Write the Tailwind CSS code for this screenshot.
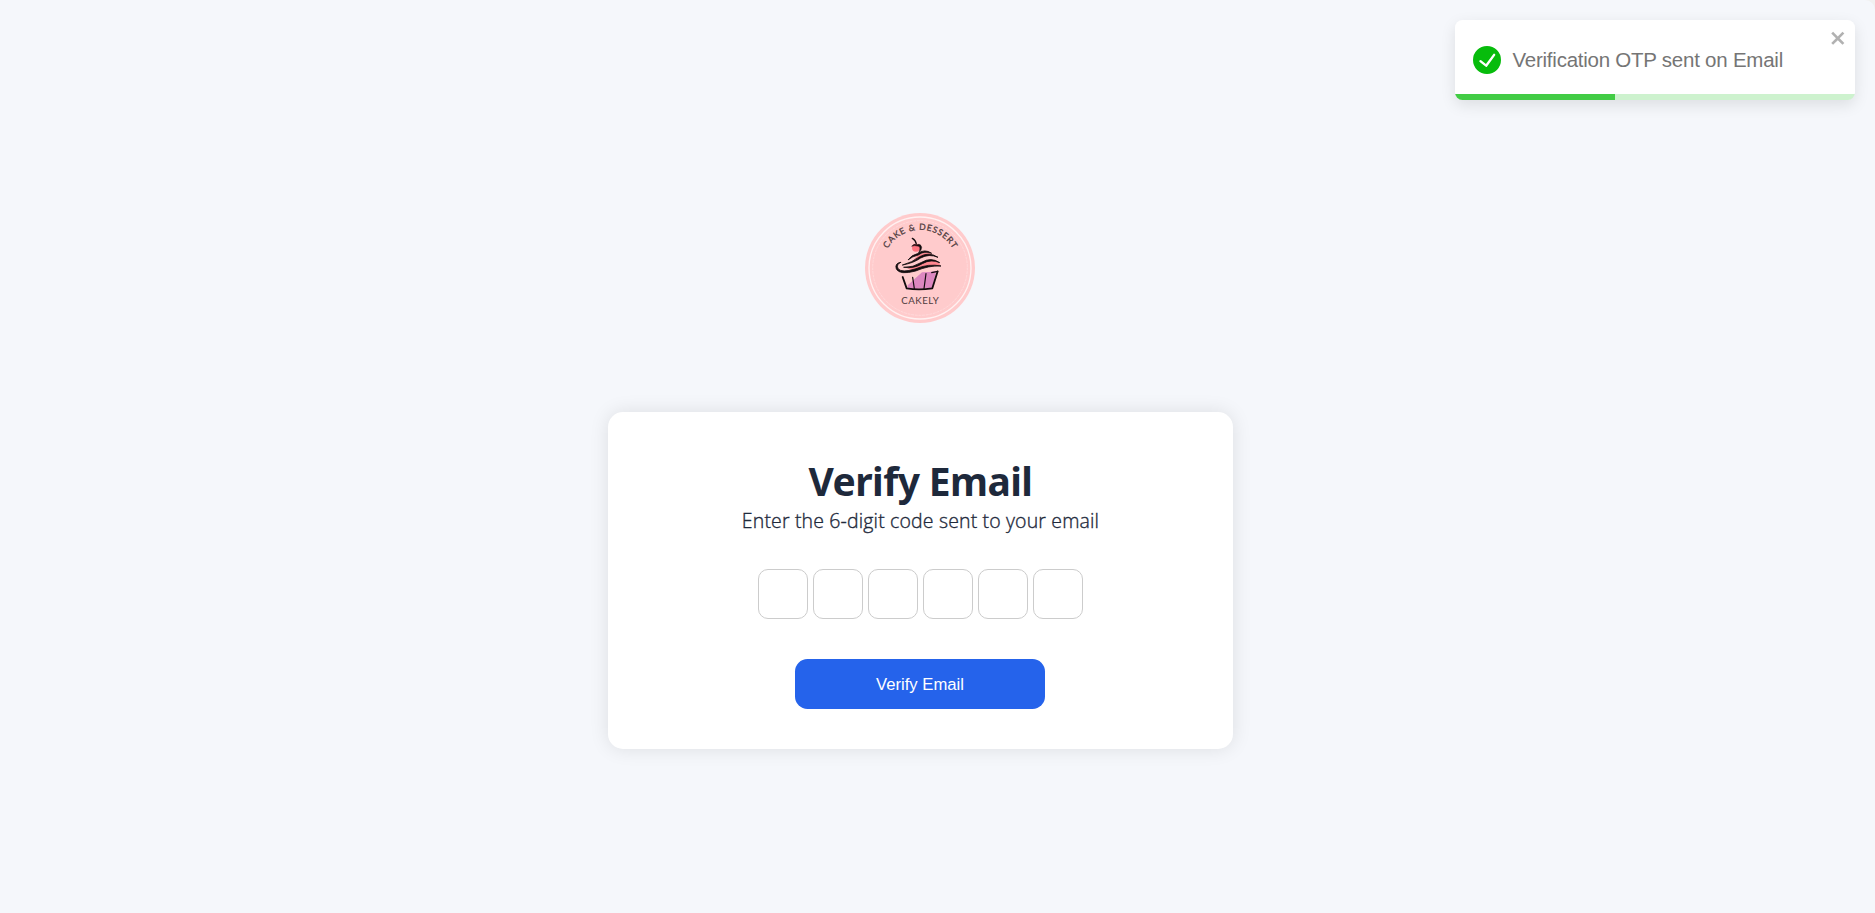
<!DOCTYPE html>
<html lang="en">
<head>
<meta charset="utf-8">
<title>Verify Email</title>
<script src="https://cdn.jsdelivr.net/npm/@tailwindcss/browser@4"></script>
</head>
<body class="bg-[#f1f1f1]">
<main class="flex h-[913px] w-full flex-col items-center overflow-hidden rounded-tr-[10px] bg-[#f5f7fb] pt-[213px] pr-[34px] text-[#1e293b] font-['Noto_Sans',sans-serif]">
  <svg class="mr-px h-[110px] w-[110px] shrink-0" viewBox="30 30 330 330" fill="none" stroke-linecap="round" stroke-linejoin="round">
    <circle cx="195" cy="195" r="165" fill="#ffcbcc"/>
    <circle cx="195" cy="195" r="153" stroke="#fff1f1" stroke-width="4"/>
    <circle cx="195" cy="195" r="142" stroke="#ffe0e1" stroke-width="2" stroke-dasharray="6 5"/>
    <path id="arc" d="M98 137A113 113 0 0 1 301 153"/>
    <text font-family="Lato, sans-serif" font-size="26" fill="#4d3a3c" stroke="#4d3a3c" stroke-width=".8"><textPath href="#arc" textLength="236">CAKE &amp; DESSERT</textPath></text>
    <text x="195" y="302" text-anchor="middle" font-family="Lato, sans-serif" font-size="29" textLength="113" fill="#4d3a3c">CAKELY</text>
    <!-- cherry -->
    <circle cx="183" cy="134" r="12" fill="#ff7480"/>
    <path d="M172 106Q182 111 184 123" stroke="#130c0e" stroke-width="4"/>
    <path d="M171 129Q177 121 185 126Q197 120 200 133Q200 143 191 149Q198 136 192 130Q178 126 171 129Z" fill="#130c0e" stroke="#130c0e" stroke-width="1.500"/>
    <!-- frosting -->
    <path d="M174 173Q190 152 208 149Q222 146 231 154L228 158Q205 157 174 173ZM157 196Q188 192 210 178Q231 168 252 180L257 189Q210 184 180 201Q168 203 157 196Z" fill="#ff8790"/>
    <path d="M137 178Q118 181 124 198Q134 217 182 204Q221 187 258 189Q221 181 180 198Q140 210 129 197Q123 184 137 178Z" fill="#130c0e" stroke="#130c0e" stroke-width="2.500"/>
    <path d="M143 186Q176 180 197 165Q222 151 249 163Q222 145 194 161Q172 178 143 186Z" fill="#130c0e" stroke="#130c0e" stroke-width="2.500"/>
    <path d="M147 193Q176 198 202 182Q228 167 254 179Q228 161 200 178Q174 194 147 193Z" fill="#130c0e" stroke="#130c0e" stroke-width="2.500"/>
    <path d="M160 170Q169 156 187 152Q209 136 230 151Q208 142 190 156Q172 160 160 170Z" fill="#130c0e" stroke="#130c0e" stroke-width="2.500"/>
    <!-- wrapper -->
    <path d="M158 247L201 208Q224 208 244 203L231 255L158 259Z" fill="#dc87c0"/>
    <path d="M143 222L155 256Q190 262 232 256L248 205" stroke="#130c0e" stroke-width="5.500"/>
    <path d="M173 223L178 257M213 212L207 257M230 209L248 205" stroke="#130c0e" stroke-width="3.500"/>
  </svg>

  <section class="mt-[89px] flex h-[337px] w-[625px] shrink-0 flex-col items-center rounded-[15px] bg-white pt-[42px] shadow-[0_0_19px_rgba(0,0,0,0.1)]">
    <h1 class="text-[39px] leading-[54px] font-bold tracking-[-0.6px] whitespace-nowrap">Verify Email</h1>
    <p class="mt-[-1px] text-[19.5px] leading-[27px] font-light tracking-[0.15px] whitespace-nowrap [-webkit-text-stroke:0.35px] font-['Open_Sans',sans-serif]">Enter the 6-digit code sent to your email</p>
    <div class="mt-[35px] flex gap-[5px]">
      <input aria-label="Digit 1" maxlength="1" class="size-[50px] rounded-[10px] border border-[#ccc]">
      <input aria-label="Digit 2" maxlength="1" class="size-[50px] rounded-[10px] border border-[#ccc]">
      <input aria-label="Digit 3" maxlength="1" class="size-[50px] rounded-[10px] border border-[#ccc]">
      <input aria-label="Digit 4" maxlength="1" class="size-[50px] rounded-[10px] border border-[#ccc]">
      <input aria-label="Digit 5" maxlength="1" class="size-[50px] rounded-[10px] border border-[#ccc]">
      <input aria-label="Digit 6" maxlength="1" class="size-[50px] rounded-[10px] border border-[#ccc]">
    </div>
    <button class="mt-10 mr-px h-[50px] w-[250px] rounded-[12.5px] bg-[#2563eb] text-[16.67px] text-white font-['Liberation_Sans',Arial,sans-serif]">Verify Email</button>
  </section>
</main>

<div role="alert" class="absolute top-5 right-5 flex h-20 w-[400px] items-center overflow-hidden rounded-[7.5px] bg-white pl-[18px] shadow-[0_5px_15px_rgba(0,0,0,0.1)] font-['Liberation_Sans',Arial,sans-serif]">
  <svg class="size-7 shrink-0" viewBox="0 0 24 24" fill="#07bc0c"><path d="M12 0a12 12 0 1012 12A12.014 12.014 0 0012 0zm6.927 8.200l-6.845 9.289a1.011 1.011 0 01-1.430.188l-4.888-3.908a1 1 0 111.250-1.562l4.076 3.261 6.227-8.451a1 1 0 111.610 1.183z"/></svg>
  <span class="ml-[11.5px] text-[20.5px] leading-[30px] tracking-[-0.24px] whitespace-nowrap text-[#757575]">Verification OTP sent on Email</span>
  <svg class="absolute top-[8px] right-[8px] h-5 w-[17.500px] fill-black opacity-30" viewBox="0 0 14 16"><path fill-rule="evenodd" d="M7.710 8.230l3.750 3.750-1.480 1.480-3.750-3.750-3.750 3.750L1 11.980l3.750-3.750L1 4.480 2.480 3l3.750 3.750L9.980 3l1.480 1.480-3.750 3.750z"/></svg>
  <div class="absolute inset-x-0 bottom-0 h-[6px] bg-[#07bc0c]/20"><div class="h-full bg-[#07bc0c]/70" style="width:40%"></div></div>
</div>
</body>
</html>
